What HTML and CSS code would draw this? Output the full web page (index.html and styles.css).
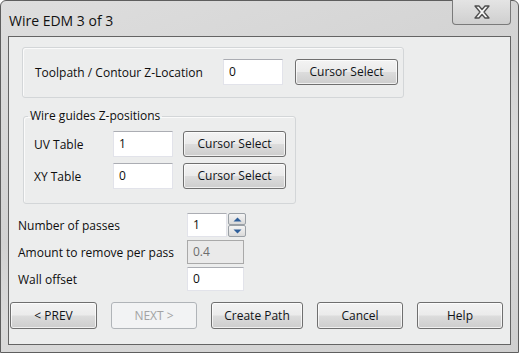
FILE: index.html
```html
<!DOCTYPE html>
<html lang="en">
<head>
  <meta charset="UTF-8">
  <title>Wire EDM 3 of 3</title>
  <link rel="stylesheet" href="styles.css">
</head>
<body>

  <div class="window">
    <div class="titlebar">
      <span class="title">Wire EDM 3 of 3</span>
      <button class="close-button" type="button" aria-label="Close">
        <svg width="20" height="14" viewBox="0 0 20 14">
          <path d="M3 1 L7 1 L10 4.5 L13 1 L17 1 L12 7 L17 13 L13 13 L10 9.5 L7 13 L3 13 L8 7 Z" fill="#f6f6f6" stroke="#4e4e4e" stroke-width="1.3" stroke-linejoin="round"/>
        </svg>
      </button>
    </div>

    <div class="client">
      <fieldset class="group group-location">
        <div class="row">
          <label class="location-label" for="zloc">Toolpath / Contour Z-Location</label>
          <input class="field field-wide" type="text" id="zloc" value="0">
          <button class="btn btn-cursor" type="button">Cursor Select</button>
        </div>
      </fieldset>

      <fieldset class="group group-guides">
        <legend>Wire guides Z-positions</legend>
        <div class="row guide-row">
          <label class="guide-label" for="uv">UV Table</label>
          <input class="field field-guide" type="text" id="uv" value="1">
          <button class="btn btn-cursor" type="button">Cursor Select</button>
        </div>
        <div class="row guide-row">
          <label class="guide-label" for="xy">XY Table</label>
          <input class="field field-guide" type="text" id="xy" value="0">
          <button class="btn btn-cursor" type="button">Cursor Select</button>
        </div>
      </fieldset>

      <div class="params">
        <div class="row param-row">
          <label class="param-label" for="passes">Number of passes</label>
          <input class="field field-spin" type="text" id="passes" value="1">
          <div class="spinner">
            <span class="spin-btn">
              <svg width="9" height="5" viewBox="0 0 9 5"><path d="M0.5 4.5 L4.5 0.5 L8.5 4.5 Z" fill="#2f5f9a"/></svg>
            </span>
            <span class="spin-btn">
              <svg width="9" height="5" viewBox="0 0 9 5"><path d="M0.5 0.5 L4.5 4.5 L8.5 0.5 Z" fill="#2f5f9a"/></svg>
            </span>
          </div>
        </div>
        <div class="row param-row">
          <label class="param-label" for="amount">Amount to remove per pass</label>
          <input class="field field-param" type="text" id="amount" value="0.4" disabled>
        </div>
        <div class="row param-row">
          <label class="param-label" for="wall">Wall offset</label>
          <input class="field field-param" type="text" id="wall" value="0">
        </div>
      </div>

      <div class="actions">
        <button class="btn btn-prev" type="button">&lt; PREV</button>
        <button class="btn btn-next" type="button" disabled>NEXT &gt;</button>
        <button class="btn btn-create" type="button">Create Path</button>
        <button class="btn btn-cancel" type="button">Cancel</button>
        <button class="btn btn-help" type="button">Help</button>
      </div>
    </div>
  </div>

</body>
</html>
```

FILE: styles.css
```css
* {
  box-sizing: border-box;
}

body {
  margin: 0;
  font-family: 'Open Sans', 'Liberation Sans', sans-serif;
  font-size: 12px;
  color: #0e0e0e;
  background-color: #ffffff;
}

.window {
  width: 519px;
  height: 353px;
  display: flex;
  flex-direction: column;
  border: 1px solid #5e5e5e;
  border-radius: 6px 6px 0 0;
  background: linear-gradient(160deg, #dedede 0%, #d2d2d2 45%, #dadada 60%, #cfcfcf 100%);
}

.titlebar {
  height: 35px;
  display: flex;
  justify-content: space-between;
  align-items: flex-start;
  padding-left: 8px;
}

.title {
  font-size: 14px;
  color: #111111;
  margin-top: 10px;
}

.close-button {
  width: 59px;
  height: 25px;
  margin-top: -1px;
  margin-right: 7px;
  padding: 0;
  display: flex;
  justify-content: center;
  align-items: center;
  border: 1px solid #7a7a7a;
  border-top: none;
  border-radius: 0 0 4px 4px;
  background: linear-gradient(#e4e4e4, #cfcfcf);
}

.client {
  flex: 1;
  display: flex;
  flex-direction: column;
  margin: 0 7px 7px 7px;
  padding-bottom: 15px;
  border: 1px solid #646464;
  background-color: #eceded;
}

.row {
  display: flex;
  align-items: center;
}

.group {
  margin: 0;
  padding: 0;
  border: 1px solid #d3d6d8;
  border-radius: 3px;
  box-shadow: inset 1px 1px 0 #fafafa;
}

.group-location {
  width: 382px;
  height: 51px;
  margin-top: 10px;
  margin-left: 13px;
  padding: 11px 0 0 12px;
}

.location-label {
  width: 188px;
}

.group-guides {
  width: 273px;
  height: 95px;
  margin-top: 11px;
  margin-left: 14px;
}

.group-guides legend {
  margin-left: 4px;
  padding: 0 2px;
  line-height: 14px;
}

.guide-row {
  height: 26px;
  margin-top: 6px;
  padding-left: 10px;
}

.guide-row:first-of-type {
  margin-top: 8px;
}

.guide-label {
  width: 79px;
}

.field {
  height: 26px;
  padding: 0 0 2px 5px;
  border: 1px solid #e2e3ea;
  border-top-color: #abadb3;
  font-family: inherit;
  font-size: 12px;
  color: #0e0e0e;
  background-color: #ffffff;
  outline: none;
}

.field-wide {
  width: 60px;
  margin-right: 12px;
}

.field-guide {
  width: 60px;
  margin-right: 10px;
}

.btn {
  height: 26px;
  padding: 0 0 1px 0;
  font-family: inherit;
  font-size: 12px;
  color: #111418;
  border: 1px solid #6f6f6f;
  border-radius: 3px;
  background: linear-gradient(#f3f3f3 0%, #ebebeb 48%, #dcdcdc 52%, #cdcdcd 100%);
  box-shadow: inset 0 0 0 1px rgba(255, 255, 255, 0.7);
}

.btn-cursor {
  width: 103px;
}

.params {
  margin-top: 9px;
  margin-left: 9px;
}

.param-row {
  height: 24px;
  margin-bottom: 3px;
}

.param-label {
  width: 169px;
}

.param-row .field {
  height: 24px;
}

.field-spin {
  width: 40px;
}

.field-param {
  width: 57px;
}

.field-param:disabled {
  border-color: #a9a9a9;
  background-color: #eaeaea;
  color: #6d6d6d;
}

.spinner {
  display: flex;
  flex-direction: column;
  margin-left: 1px;
}

.spin-btn {
  width: 18px;
  height: 12px;
  display: flex;
  justify-content: center;
  align-items: center;
  border: 1px solid #9aa0a6;
  border-radius: 2px;
  background: linear-gradient(#f4f4f4, #dadada);
}

.actions {
  display: flex;
  gap: 14px;
  margin-top: auto;
  margin-left: 1px;
}

.actions .btn {
  height: 27px;
}

.btn-prev {
  width: 87px;
}

.btn-next {
  width: 86px;
}

.btn-next:disabled {
  color: #a3a3a3;
  border-color: #b0b4b8;
  background: #f2f3f4;
  box-shadow: none;
}

.btn-create {
  width: 92px;
}

.btn-cancel {
  width: 86px;
}

.btn-help {
  width: 86px;
}
```
